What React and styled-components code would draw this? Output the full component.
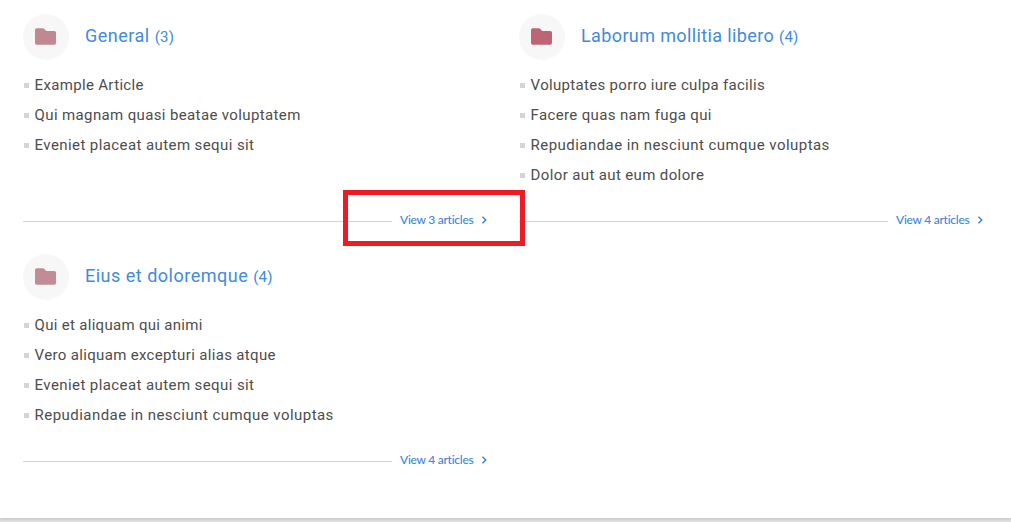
import React from "react";
import styled, { createGlobalStyle } from "styled-components";

const GlobalStyle = createGlobalStyle`
  * { box-sizing: border-box; }
  body {
    margin: 0;
    background: #e0e0e0;
    font-family: Roboto, "Liberation Sans", sans-serif;
    overflow: hidden;
  }
`;

const Page = styled.main`
  position: relative;
  height: 518px;
  padding: 14px 27px 0 23px;
  background: #fff;
  box-shadow: 0 1px 3px rgba(0, 0, 0, 0.14);
`;

const Shell = styled.div`
  height: 522px;
  overflow: hidden;
`;

const Grid = styled.div`
  display: grid;
  grid-template-columns: 465px 465px;
  grid-auto-rows: 240px;
  column-gap: 31px;
`;

const Category = styled.section`
  display: flex;
  flex-direction: column;
`;

const Header = styled.header`
  display: flex;
  align-items: center;
  height: 46px;
  gap: 16px;
`;

const IconCircle = styled.span`
  display: flex;
  align-items: center;
  justify-content: center;
  width: 46px;
  height: 46px;
  border-radius: 50%;
  background: #f7f7f7;
  color: ${(p) => p.$color};
`;

const Title = styled.h2`
  margin: 0;
  padding-bottom: 1px;
  font-size: 18px;
  line-height: 24px;
  font-weight: 400;
  white-space: nowrap;
  color: #418ae0;
  letter-spacing: ${(p) => p.$track}px;
`;

const Count = styled.span`
  font-size: 15px;
  letter-spacing: 0.2px;
`;

const List = styled.ul`
  flex: none;
  height: 120px;
  margin: 10px 0 0;
  padding: 0;
  list-style: none;
`;

const Item = styled.li`
  display: flex;
  align-items: center;
  height: 30px;
  padding-left: 1px;
  font-size: 15px;
  line-height: 30px;
  white-space: nowrap;
  color: #4d4d4d;
  letter-spacing: ${(p) => p.$track}px;

  &::before {
    content: "";
    width: 5px;
    height: 5px;
    margin: 1px 5.6px 0 0;
    background: #d2d5d7;
  }
`;

const Footer = styled.footer`
  display: flex;
  align-items: center;
  height: 30px;
  margin-top: 15px;
`;

const Rule = styled.span`
  flex: 1;
  height: 1px;
  margin: 2px 8px 0 0;
  background: #d2d4d5;
`;

const ViewLink = styled.a`
  display: flex;
  align-items: center;
  justify-content: space-between;
  width: 88px;
  font-family: Lato, sans-serif;
  font-size: 12px;
  font-weight: 500;
  line-height: 30px;
  letter-spacing: -0.27px;
  white-space: nowrap;
  color: #3c86dc;
`;

const Highlight = styled.div`
  position: absolute;
  left: 343px;
  top: 190px;
  width: 182px;
  height: 56px;
  border: 5px solid #ed1c24;
`;

const categories = [
  {
    title: "General", count: 3, color: "#c08890", track: 0.5,
    articles: [
      ["Example Article", 0.33],
      ["Qui magnam quasi beatae voluptatem", 0.37],
      ["Eveniet placeat autem sequi sit", 0.41],
    ],
  },
  {
    title: "Laborum mollitia libero", count: 4, color: "#bd6475", track: 0.38,
    articles: [
      ["Voluptates porro iure culpa facilis", 0.32],
      ["Facere quas nam fuga qui", 0.36],
      ["Repudiandae in nesciunt cumque voluptas", 0.45],
      ["Dolor aut aut eum dolore", 0.37],
    ],
  },
  {
    title: "Eius et doloremque", count: 4, color: "#c08d97", track: 0.5,
    articles: [
      ["Qui et aliquam qui animi", 0.3],
      ["Vero aliquam excepturi alias atque", 0.34],
      ["Eveniet placeat autem sequi sit", 0.41],
      ["Repudiandae in nesciunt cumque voluptas", 0.45],
    ],
  },
];

const Folder = () => (
  <svg width="22" height="18" viewBox="0 0 22 18" fill="currentColor">
    <path d="M1.7 .3H7.9Q8.8 .3 9.4 1L11.2 3H19.3Q21 3 21 4.7V15Q21 16.7 19.3 16.7H1.7Q0 16.7 0 15V2Q0 .3 1.7 .3Z" />
  </svg>
);

const Chevron = () => (
  <svg width="8" height="10" viewBox="0 0 8 10" fill="none" stroke="currentColor" strokeWidth="1.5">
    <path d="M2.4 1.8L5.8 5L2.4 8.2" />
  </svg>
);

export default function App() {
  return (
    <Shell>
      <GlobalStyle />
      <Page>
        <Grid>
          {categories.map((c) => (
            <Category key={c.title}>
              <Header>
                <IconCircle $color={c.color}><Folder /></IconCircle>
                <Title $track={c.track}>{c.title} <Count>({c.count})</Count></Title>
              </Header>
              <List>
                {c.articles.map(([name, track]) => (
                  <Item key={name} $track={track}>{name}</Item>
                ))}
              </List>
              <Footer>
                <Rule />
                <ViewLink>View {c.count} articles <Chevron /></ViewLink>
              </Footer>
            </Category>
          ))}
        </Grid>
        <Highlight />
      </Page>
    </Shell>
  );
}
